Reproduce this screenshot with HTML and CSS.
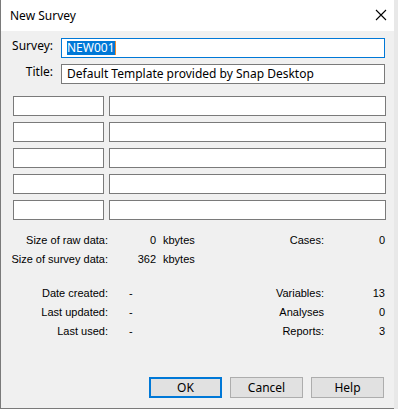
FILE: index.html
```html
<!DOCTYPE html>
<html lang="en">
<head>
  <meta charset="UTF-8">
  <title>New Survey</title>
  <link rel="stylesheet" href="styles.css">
</head>
<body>

  <div class="window">
    <div class="titlebar">
      <span class="title">New Survey</span>
      <svg class="close" width="12" height="12" viewBox="0 0 12 12">
        <path d="M1 1 L11 11 M11 1 L1 11" stroke="#000" stroke-width="1.1" fill="none"/>
      </svg>
    </div>

    <div class="content">
      <div class="head-form">
        <label>Survey:</label>
        <div class="field focused"><span class="sel">NEW001</span><span class="caret"></span></div>
        <label>Title:</label>
        <div class="field">Default Template provided by Snap Desktop</div>
      </div>

      <div class="boxes">
        <div class="box"></div><div class="box"></div>
        <div class="box"></div><div class="box"></div>
        <div class="box"></div><div class="box"></div>
        <div class="box"></div><div class="box"></div>
        <div class="box"></div><div class="box"></div>
      </div>

      <div class="stats">
        <span class="lbl">Size of raw data:</span>
        <span class="num">0</span>
        <span class="unit">kbytes</span>
        <span class="rlbl">Cases:</span>
        <span class="rval">0</span>

        <span class="lbl">Size of survey data:</span>
        <span class="num">362</span>
        <span class="unit">kbytes</span>
        <span class="rlbl"></span>
        <span class="rval"></span>
      </div>

      <div class="stats dates">
        <span class="lbl">Date created:</span>
        <span class="dash">-</span>
        <span class="rlbl">Variables:</span>
        <span class="rval">13</span>

        <span class="lbl">Last updated:</span>
        <span class="dash">-</span>
        <span class="rlbl">Analyses</span>
        <span class="rval">0</span>

        <span class="lbl">Last used:</span>
        <span class="dash">-</span>
        <span class="rlbl">Reports:</span>
        <span class="rval">3</span>
      </div>

      <div class="buttons">
        <button class="default">OK</button>
        <button>Cancel</button>
        <button>Help</button>
      </div>
    </div>
  </div>

</body>
</html>
```

FILE: styles.css
```css
body {
  margin: 0;
  background-color: #e8e8e8;
  font-family: "Noto Sans", "Liberation Sans", sans-serif;
  color: #000;
}

.window {
  width: 394px;
  height: 409px;
  box-sizing: border-box;
  background-color: #f0f0f0;
  border-left: 1px solid #7a7a7a;
  border-bottom: 1px solid #7a7a7a;
  display: flex;
  flex-direction: column;
}

.titlebar {
  height: 31px;
  background-color: #fff;
  display: flex;
  align-items: center;
  padding: 0 7px 0 9px;
  flex-shrink: 0;
}

.title {
  font-size: 12px;
  flex: 1;
  margin-top: -1px;
}

.close {
  margin-top: -2px;
}

.content {
  flex: 1;
  display: flex;
  flex-direction: column;
  padding-top: 7px;
}

.head-form {
  display: grid;
  grid-template-columns: 52px 324px;
  column-gap: 8px;
  row-gap: 6px;
  font-size: 12px;
}

.head-form label {
  text-align: right;
  line-height: 16px;
}

.field {
  height: 20px;
  box-sizing: border-box;
  border: 1px solid #7a7a7a;
  background-color: #fff;
  padding: 0 5px;
  line-height: 18px;
  white-space: nowrap;
  display: flex;
  align-items: center;
}

.field.focused {
  border-color: #0078d7;
}

.sel {
  background-color: #0078d7;
  color: #fff;
  line-height: 14px;
}

.caret {
  width: 1px;
  height: 14px;
  background-color: #f08c30;
}

.boxes {
  margin: 12px 0 0 12px;
  display: grid;
  grid-template-columns: 91px 277px;
  column-gap: 5px;
  row-gap: 6px;
}

.box {
  height: 20px;
  box-sizing: border-box;
  border: 1px solid #7a7a7a;
  background-color: #fff;
}

.stats {
  margin-top: 11px;
  display: grid;
  grid-template-columns: 107px 48px 1fr 100px 61px;
  grid-auto-rows: 19px;
  font-family: "Liberation Sans", Arial, sans-serif;
  font-size: 11px;
  line-height: 19px;
  color: #000;
  padding-right: 9px;
}

.stats.dates {
  margin-top: 15px;
  grid-template-columns: 107px 1fr 100px 61px;
}

.lbl,
.num,
.rlbl,
.rval {
  text-align: right;
}

.unit {
  padding-left: 7px;
}

.dash {
  padding-left: 21px;
}

.buttons {
  margin-top: auto;
  display: flex;
  justify-content: flex-end;
  gap: 8px;
  padding: 0 10px 10px 0;
}

button {
  width: 73px;
  height: 21px;
  box-sizing: border-box;
  background-color: #e1e1e1;
  border: 1px solid #adadad;
  font-family: "Noto Sans", "Liberation Sans", sans-serif;
  font-size: 12px;
  padding: 0;
  color: #000;
}

button.default {
  border: 2px solid #0078d7;
}
```
